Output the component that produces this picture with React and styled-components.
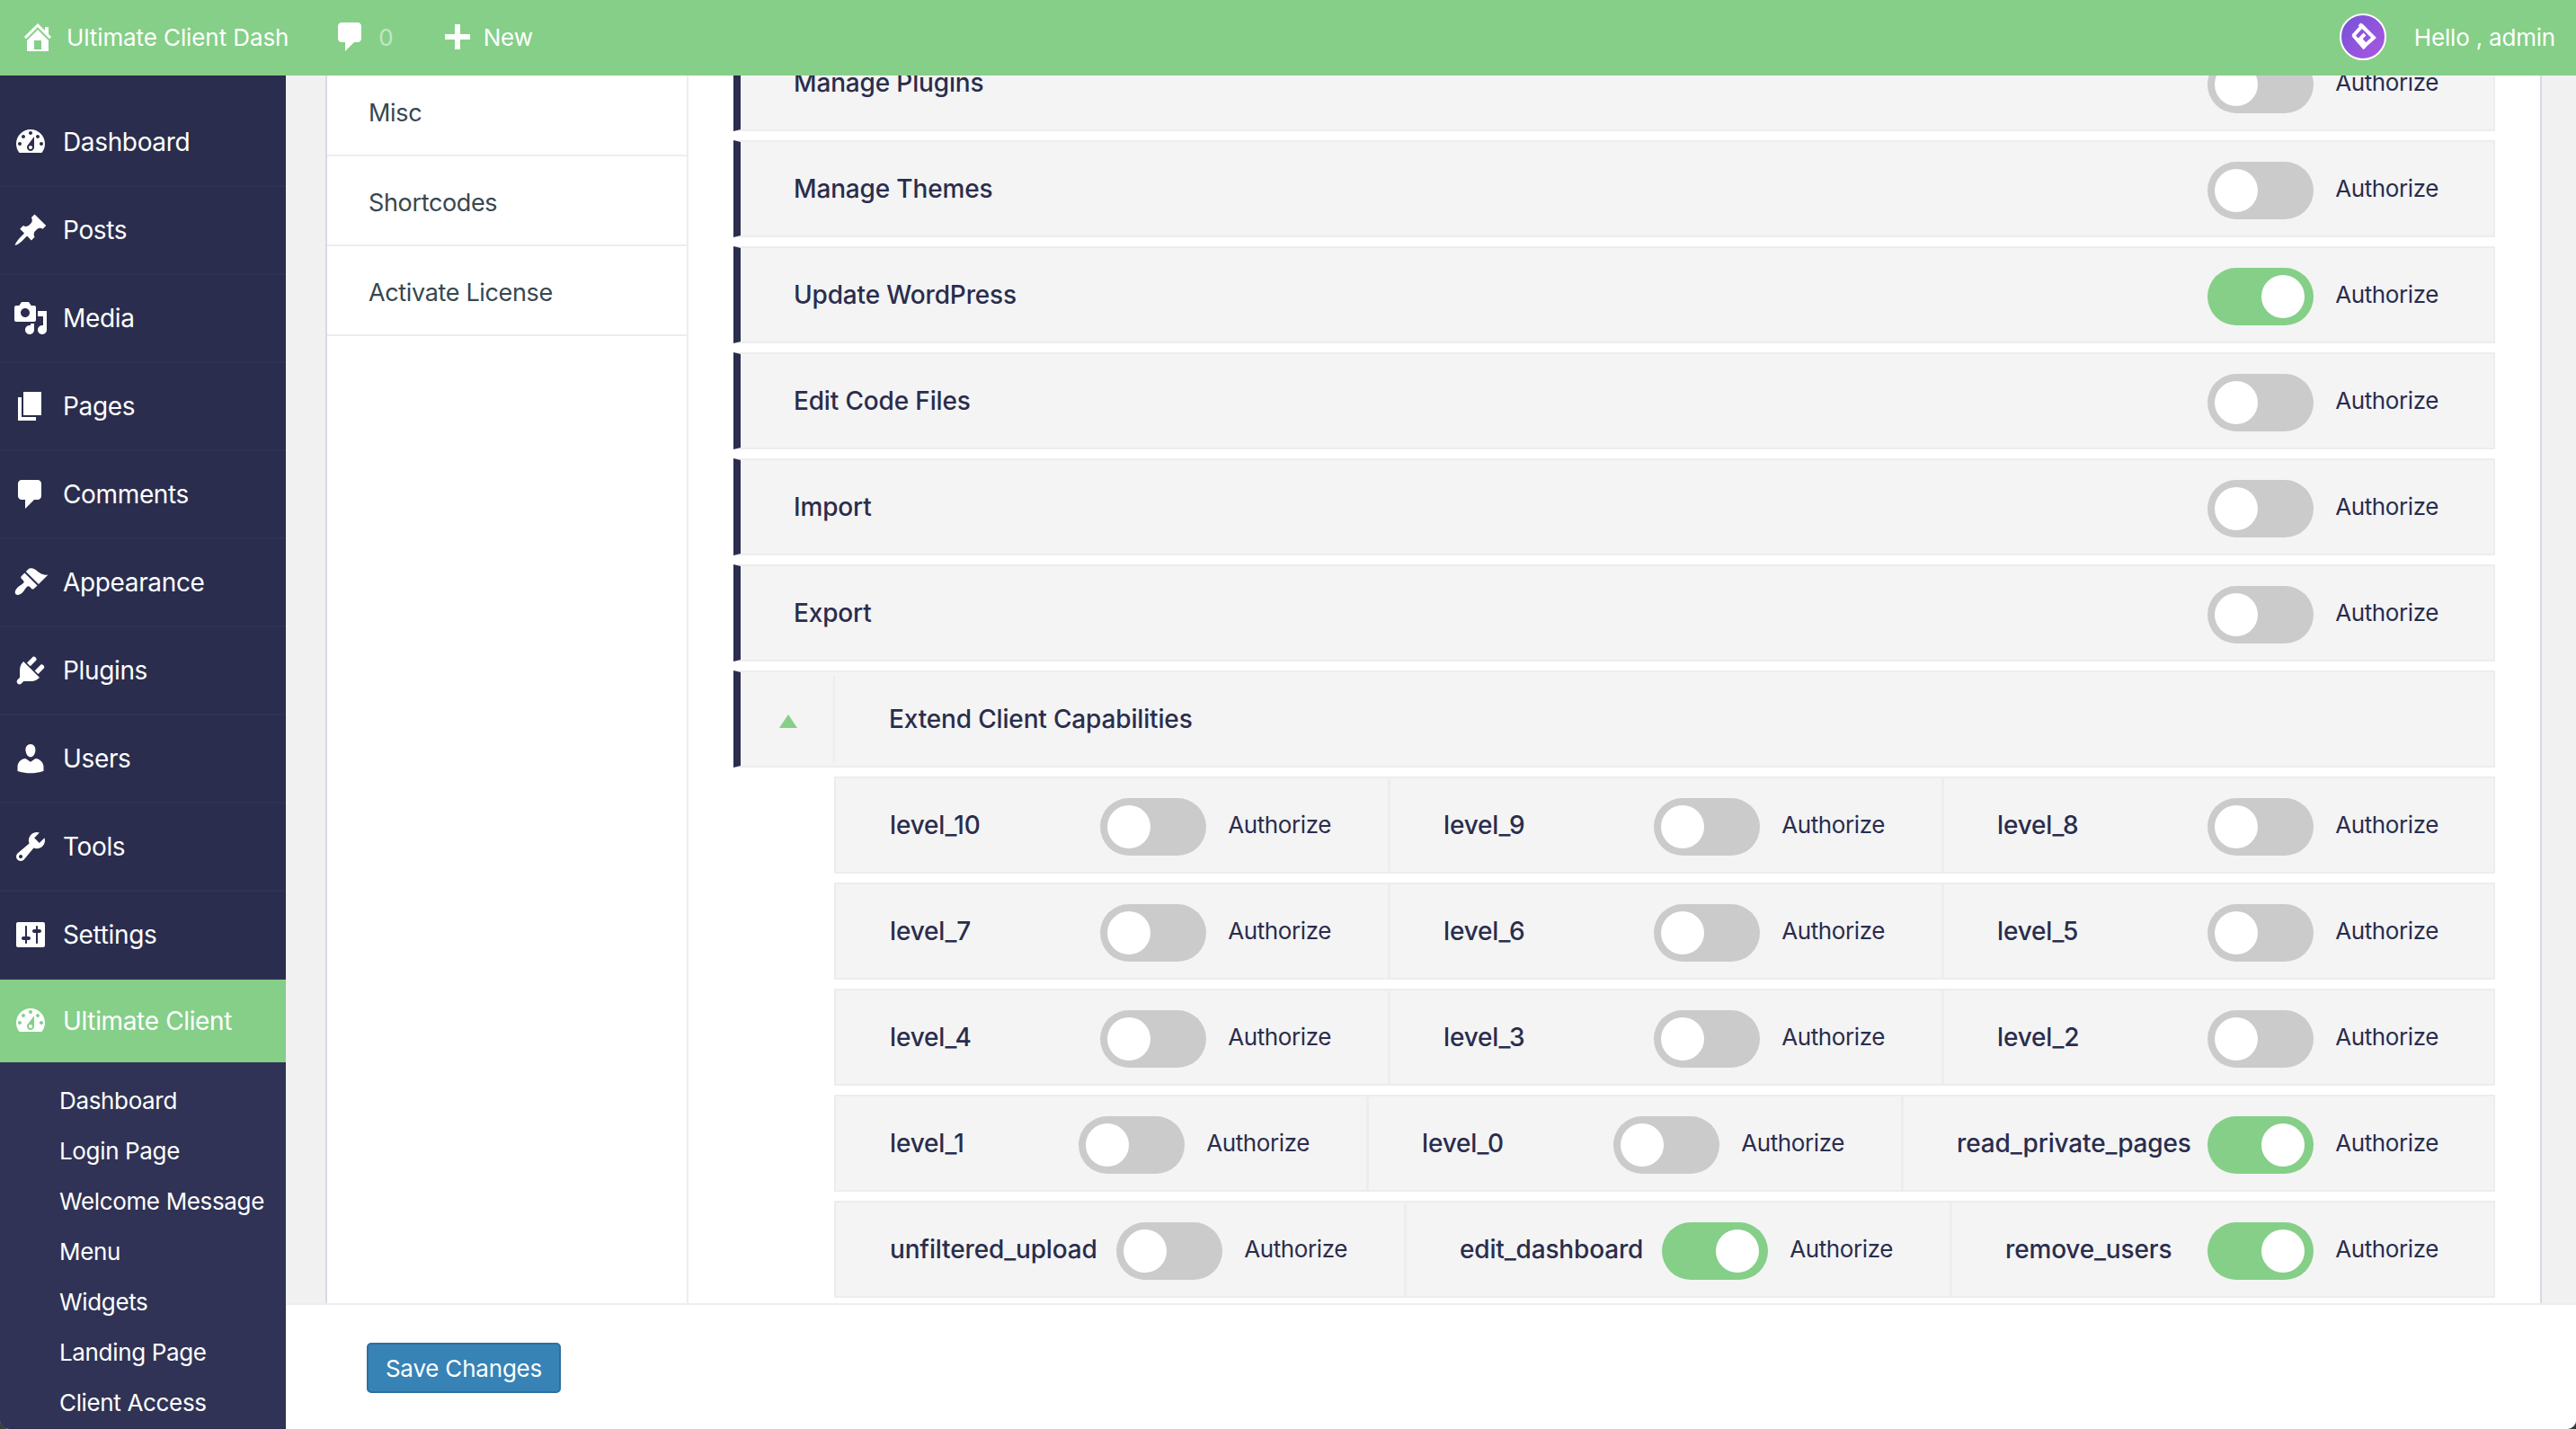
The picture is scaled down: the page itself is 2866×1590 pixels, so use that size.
import React from 'react'
import styled, { createGlobalStyle } from 'styled-components'

const colors = {
  green: '#85cf88',
  navy: '#2a2d4d',
  navyLine: '#2f3254',
  submenu: '#303355',
  gutter: '#f1f1f1',
  panelLine: '#d5d9e8',
  line: '#ededed',
  row: '#f4f4f4',
  off: '#cbcbcb',
}

const GlobalStyle = createGlobalStyle`
  html, body {
    margin: 0;
    height: 100%;
    background: #3a3a3a;
  }
  * {
    box-sizing: border-box;
  }
`

const Shell = styled.div`
  width: 2866px;
  height: 1590px;
  display: flex;
  flex-direction: column;
  overflow: hidden;
  background: #fff;
  border-radius: 0 0 10px 10px;
  font-family: Inter, 'Noto Sans', sans-serif;
`

const TopBar = styled.header`
  flex: none;
  height: 84px;
  display: flex;
  align-items: center;
  padding: 0 23px 2px 22px;
  background: ${colors.green};
  color: #fff;
  font-size: 26px;
  letter-spacing: -0.1px;
  position: relative;
  z-index: 2;
`

const BarGroup = styled.div`
  display: flex;
  align-items: center;
  margin-right: ${props => props.$gap || 0}px;
`

const BarText = styled.span`
  margin-left: ${props => props.$left || 0}px;
  opacity: ${props => props.$dim ? 0.5 : 1};
`

const BarSpacer = styled.div`
  flex: 1;
`

const Avatar = styled.div`
  width: 52px;
  height: 52px;
  margin-right: 31px;
  display: flex;
  align-items: center;
  justify-content: center;
  border: 2px solid #fff;
  border-radius: 50%;
  background: linear-gradient(135deg, #7452d8, #ac56e2);
`

const Greeting = styled.span`
  letter-spacing: -0.2px;
`

const Body = styled.div`
  flex: 1;
  min-height: 0;
  display: flex;
`

const Sidebar = styled.nav`
  flex: none;
  width: 318px;
  padding-top: 26px;
  overflow: hidden;
  background: ${colors.navy};
`

const MenuItem = styled.div`
  height: ${props => props.$active ? 92 : 98}px;
  display: flex;
  align-items: center;
  gap: 16px;
  padding-left: 14px;
  border-bottom: ${props => props.$active ? 'none' : `2px solid ${colors.navyLine}`};
  background: ${props => props.$active ? colors.green : 'transparent'};
  color: #fff;
  font-size: 28px;
  letter-spacing: -0.35px;
`

const Submenu = styled.div`
  padding: 15px 0 0 66px;
  background: ${colors.submenu};
  color: #fff;
  font-size: 26px;
  letter-spacing: -0.35px;
`

const SubmenuItem = styled.div`
  height: 56px;
  line-height: 56px;
`

const Main = styled.main`
  flex: 1;
  min-width: 0;
  display: flex;
  flex-direction: column;
`

const Gutter = styled.div`
  flex: none;
  height: 1368px;
  display: flex;
  padding: 0 38px 0 44px;
  background: ${colors.gutter};
  border-bottom: 2px solid ${colors.line};
`

const Panel = styled.div`
  flex: 1;
  display: flex;
  overflow: hidden;
  background: #fff;
  border-left: 2px solid ${colors.panelLine};
  border-right: 2px solid ${colors.panelLine};
`

const TabList = styled.div`
  flex: none;
  width: 402px;
  margin-top: -10px;
  border-right: 2px solid ${colors.line};
`

const Tab = styled.div`
  height: 100px;
  display: flex;
  align-items: center;
  padding: 5px 0 0 46px;
  border-bottom: 2px solid ${colors.line};
  color: #37474f;
  font-size: 27px;
  letter-spacing: -0.35px;
`

const Content = styled.div`
  flex: 1;
  min-width: 0;
  margin-top: -46px;
  padding: 0 50px 0 50px;
  display: flex;
  flex-direction: column;
  gap: 10px;
`

const Row = styled.div`
  flex: none;
  height: 108px;
  display: flex;
  align-items: center;
  justify-content: space-between;
  padding: 0 61px 0 59px;
  background: ${colors.row};
  border: 2px solid ${colors.line};
  border-left: 8px solid ${colors.navy};
`

const Label = styled.span`
  color: ${colors.navy};
  font-size: 28px;
  font-weight: 500;
  letter-spacing: -0.16px;
  white-space: nowrap;
`

const Control = styled.div`
  display: flex;
  align-items: center;
  gap: 24px;
`

const Track = styled.div`
  width: 118px;
  height: 64px;
  margin-top: 4px;
  display: flex;
  align-items: center;
  justify-content: ${props => props.$on ? 'flex-end' : 'flex-start'};
  padding: 0 ${props => props.$on ? 10 : 8}px;
  border-radius: 32px;
  background: ${props => props.$on ? colors.green : colors.off};
`

const Knob = styled.div`
  width: 48px;
  height: 48px;
  border-radius: 50%;
  background: #fff;
`

const AuthorizeText = styled.span`
  margin-bottom: 2px;
  color: ${colors.navy};
  font-size: 26px;
  letter-spacing: -0.4px;
`

const GroupHead = styled.div`
  flex: none;
  height: 108px;
  display: flex;
  align-items: center;
  padding: 4px 0;
  background: ${colors.row};
  border: 2px solid ${colors.line};
  border-left: 8px solid ${colors.navy};
`

const Arrow = styled.div`
  flex: none;
  width: 105px;
  height: 100%;
  display: flex;
  align-items: center;
  justify-content: center;
  padding: 5px 0 0 2px;
  border-right: 2px solid ${colors.line};
`

const Triangle = styled.div`
  width: 0;
  height: 0;
  border-left: 10px solid transparent;
  border-right: 10px solid transparent;
  border-bottom: 15px solid ${colors.green};
`

const GroupTitle = styled(Label)`
  margin-left: 60px;
`

const SubRow = styled.div`
  flex: none;
  height: 108px;
  margin-left: 112px;
  display: grid;
  grid-template-columns: ${props => props.$columns};
  background: ${colors.row};
  border: 2px solid ${colors.line};
`

const Cell = styled.div`
  display: flex;
  align-items: center;
  justify-content: space-between;
  padding: 0 ${props => props.$last ? 61 : 63}px 0 ${props => props.$first ? 60 : 59}px;
  border-left: ${props => props.$first ? 'none' : `3px solid ${colors.line}`};
`

const Footer = styled.div`
  flex: 1;
  padding: 42px 0 0 90px;
  background: #fff;
`

const SaveButton = styled.button`
  width: 216px;
  height: 56px;
  padding: 0;
  background: #3783b5;
  border: 2px solid #2e6f9f;
  border-radius: 5px;
  color: #fff;
  font-family: inherit;
  font-size: 26px;
  letter-spacing: -0.2px;
`

const IconSvg = styled.svg`
  flex: none;
  width: 40px;
  height: 40px;
  fill: #fff;
  fill-rule: evenodd;
`

// dashicons shapes, 20x20 grid
const paths = {
  home: 'M16 8.5l1.53 1.53-1.06 1.06L10 4.62l-6.47 6.47-1.06-1.06L10 2.5l4 4v-2h2v4zm-6-2.46l6 5.99V18H4v-5.97zM12 17v-5H8v5h4z',
  dashboard: 'M3.76 16h12.48c1.1-1.37 1.76-3.11 1.76-5 0-4.42-3.58-8-8-8s-8 3.58-8 8c0 1.89.66 3.63 1.76 5zM10 4c.55 0 1 .45 1 1s-.45 1-1 1-1-.45-1-1 .45-1 1-1zM6 6c.55 0 1 .45 1 1s-.45 1-1 1-1-.45-1-1 .45-1 1-1zm8 0c.55 0 1 .45 1 1s-.45 1-1 1-1-.45-1-1 .45-1 1-1zm-5.37 5.55L12 7v6c0 1.1-.9 2-2 2s-2-.9-2-2c0-.57.24-1.08.63-1.45zM4 10c.55 0 1 .45 1 1s-.45 1-1 1-1-.45-1-1 .45-1 1-1zm12 0c.55 0 1 .45 1 1s-.45 1-1 1-1-.45-1-1 .45-1 1-1zm-5 3c0-.55-.45-1-1-1s-1 .45-1 1 .45 1 1 1 1-.45 1-1z',
  post: 'M10.44 3.02l1.82-1.82 6.36 6.35-1.83 1.82c-1.05-.68-2.48-.57-3.41.36l-.75.75c-.92.93-1.04 2.35-.35 3.41l-1.83 1.82-2.41-2.41-2.8 2.79c-.42.42-3.38 2.71-3.8 2.29s1.86-3.39 2.28-3.81l2.79-2.79L4.1 9.36l1.83-1.82c1.05.69 2.48.57 3.4-.36l.75-.75c.93-.92 1.05-2.35.36-3.41z',
  media: 'M13 11V4c0-.55-.45-1-1-1h-1.67L9 1H5L3.67 3H2c-.55 0-1 .45-1 1v7c0 .55.45 1 1 1h10c.55 0 1-.45 1-1zM7 4.5c1.38 0 2.5 1.12 2.5 2.5S8.38 9.5 7 9.5 4.5 8.38 4.5 7 5.62 4.5 7 4.5zM14 6h5v10.5c0 1.38-1.12 2.5-2.5 2.5S14 17.88 14 16.5s1.12-2.5 2.5-2.5c.17 0 .34.02.5.05V9h-3V6zm-4 8.05V13h2v3.5c0 1.38-1.12 2.5-2.5 2.5S7 17.88 7 16.5 8.12 14 9.5 14c.17 0 .34.02.5.05z',
  page: 'M6 15V2h10v13H6zm-1 1h8v2H3V5h2v11z',
  comment: 'M5 2h9c1.1 0 2 .9 2 2v7c0 1.1-.9 2-2 2h-2l-5 5v-5H5c-1.1 0-2-.9-2-2V4c0-1.1.9-2 2-2z',
  appearance: 'M14.48 11.06L7.41 3.99l1.5-1.5c.5-.56 2.3-.47 3.51.32 1.21.8 1.43 1.28 2.91 2.1 1.18.64 2.45 1.26 4.45.85zm-.71.71L6.7 4.7 4.93 6.47c-.39.39-.39 1.02 0 1.41l1.06 1.06c.39.39.39 1.03 0 1.42-.6.6-1.43 1.11-2.21 1.69-.35.26-.7.53-1.01.84-1.34 1.34-1.77 2.9-.96 3.71.81.81 2.37.38 3.71-.96.31-.31.58-.66.84-1.01.58-.78 1.09-1.61 1.69-2.21.39-.39 1.03-.39 1.42 0l1.06 1.06c.39.39 1.02.39 1.41 0z',
  plugin: 'M13.11 4.36L9.87 7.6 8 5.73l3.24-3.24c.35-.34 1.05-.2 1.56.32.52.51.66 1.21.31 1.55zm-8 1.77l.91-1.12 9.01 9.01-1.19.84c-.71.71-2.63 1.16-3.82 1.16H6.14L4.9 17.26c-.59.59-1.54.59-2.12 0-.59-.58-.59-1.53 0-2.12l1.24-1.24v-3.88c0-1.13.4-3.19 1.09-3.89zm7.26 3.97l3.24-3.24c.34-.35 1.04-.21 1.55.31.52.51.66 1.21.31 1.55l-3.24 3.25z',
  users: 'M10 9.25c-2.27 0-2.73-3.44-2.73-3.44C7 4.02 7.82 2 9.97 2c2.16 0 2.98 2.02 2.71 3.81 0 0-.41 3.44-2.68 3.44zm0 2.57L12.72 10c2.39 0 4.52 2.33 4.52 4.53v2.49s-3.65 1.13-7.24 1.13c-3.65 0-7.24-1.13-7.24-1.13v-2.49c0-2.25 1.94-4.48 4.47-4.48z',
  tools: 'M16.68 9.77c-1.34 1.34-3.3 1.67-4.95.99l-5.41 6.52c-.99.99-2.59.99-3.58 0s-.99-2.59 0-3.57l6.52-5.42c-.68-1.65-.35-3.61.99-4.95 1.28-1.28 3.12-1.62 4.72-1.06l-2.89 2.89 2.82 2.82 2.86-2.87c.53 1.58.18 3.39-1.08 4.65zM3.81 16.21c.4.39 1.04.39 1.43 0 .4-.4.4-1.04 0-1.43-.39-.4-1.03-.4-1.43 0-.39.39-.39 1.03 0 1.43z',
  settings: 'M18 16V4c0-.55-.45-1-1-1H3c-.55 0-1 .45-1 1v12c0 .55.45 1 1 1h14c.55 0 1-.45 1-1zM8 11h1c.55 0 1 .45 1 1s-.45 1-1 1H8v1.5c0 .28-.22.5-.5.5s-.5-.22-.5-.5V13H6c-.55 0-1-.45-1-1s.45-1 1-1h1V5.5c0-.28.22-.5.5-.5s.5.22.5.5V11zm5-2h-1c-.55 0-1-.45-1-1s.45-1 1-1h1V5.5c0-.28.22-.5.5-.5s.5.22.5.5V7h1c.55 0 1 .45 1 1s-.45 1-1 1h-1v5.5c0 .28-.22.5-.5.5s-.5-.22-.5-.5V9z',
  plus: 'M8.5 3h3v5.5H17v3h-5.5V17h-3v-5.5H3v-3h5.5z',
}

const Icon = ({ name }) => (
  <IconSvg viewBox="0 0 20 20">
    <path d={paths[name]} />
  </IconSvg>
)

const Logo = () => (
  <svg width="30" height="34" viewBox="0 0 30 34" fill="none" stroke="#fff" strokeWidth="4">
    <path d="M4 15 L17 30" />
    <path d="M4 16 L14 5 L27 18 L18 26 L12 19 L17 14" />
    <path d="M11 3 L17 8" />
  </svg>
)

const menu = [
  ['dashboard', 'Dashboard'],
  ['post', 'Posts'],
  ['media', 'Media'],
  ['page', 'Pages'],
  ['comment', 'Comments'],
  ['appearance', 'Appearance'],
  ['plugin', 'Plugins'],
  ['users', 'Users'],
  ['tools', 'Tools'],
  ['settings', 'Settings'],
]

const submenu = ['Dashboard', 'Login Page', 'Welcome Message', 'Menu', 'Widgets', 'Landing Page', 'Client Access']

const capabilities = [
  ['Manage Plugins', false],
  ['Manage Themes', false],
  ['Update WordPress', true],
  ['Edit Code Files', false],
  ['Import', false],
  ['Export', false],
]

const extended = [
  { columns: '614px 616px 1fr', cells: [['level_10', false], ['level_9', false], ['level_8', false]] },
  { columns: '614px 616px 1fr', cells: [['level_7', false], ['level_6', false], ['level_5', false]] },
  { columns: '614px 616px 1fr', cells: [['level_4', false], ['level_3', false], ['level_2', false]] },
  { columns: '590px 595px 1fr', cells: [['level_1', false], ['level_0', false], ['read_private_pages', true]] },
  { columns: '632px 607px 1fr', cells: [['unfiltered_upload', false], ['edit_dashboard', true], ['remove_users', true]] },
]

const Authorize = ({ on }) => (
  <Control>
    <Track $on={on}>
      <Knob />
    </Track>
    <AuthorizeText>Authorize</AuthorizeText>
  </Control>
)

export default function App() {
  return (
    <>
      <GlobalStyle />
      <Shell>
        <TopBar>
          <BarGroup $gap={49}>
            <Icon name="home" />
            <BarText $left={12}>Ultimate Client Dash</BarText>
          </BarGroup>
          <BarGroup $gap={51}>
            <Icon name="comment" />
            <BarText $left={11} $dim>0</BarText>
          </BarGroup>
          <BarGroup>
            <Icon name="plus" />
            <BarText $left={9}>New</BarText>
          </BarGroup>
          <BarSpacer />
          <Avatar>
            <Logo />
          </Avatar>
          <Greeting>Hello , admin</Greeting>
        </TopBar>
        <Body>
          <Sidebar>
            {menu.map(([icon, label]) => (
              <MenuItem key={label}>
                <Icon name={icon} />
                {label}
              </MenuItem>
            ))}
            <MenuItem $active>
              <Icon name="dashboard" />
              Ultimate Client
            </MenuItem>
            <Submenu>
              {submenu.map(label => (
                <SubmenuItem key={label}>{label}</SubmenuItem>
              ))}
            </Submenu>
          </Sidebar>
          <Main>
            <Gutter>
              <Panel>
                <TabList>
                  <Tab>Misc</Tab>
                  <Tab>Shortcodes</Tab>
                  <Tab>Activate License</Tab>
                </TabList>
                <Content>
                  {capabilities.map(([label, on]) => (
                    <Row key={label}>
                      <Label>{label}</Label>
                      <Authorize on={on} />
                    </Row>
                  ))}
                  <GroupHead>
                    <Arrow>
                      <Triangle />
                    </Arrow>
                    <GroupTitle>Extend Client Capabilities</GroupTitle>
                  </GroupHead>
                  {extended.map(row => (
                    <SubRow key={row.cells[0][0]} $columns={row.columns}>
                      {row.cells.map(([label, on], i) => (
                        <Cell key={label} $first={i === 0} $last={i === 2}>
                          <Label>{label}</Label>
                          <Authorize on={on} />
                        </Cell>
                      ))}
                    </SubRow>
                  ))}
                </Content>
              </Panel>
            </Gutter>
            <Footer>
              <SaveButton>Save Changes</SaveButton>
            </Footer>
          </Main>
        </Body>
      </Shell>
    </>
  )
}
